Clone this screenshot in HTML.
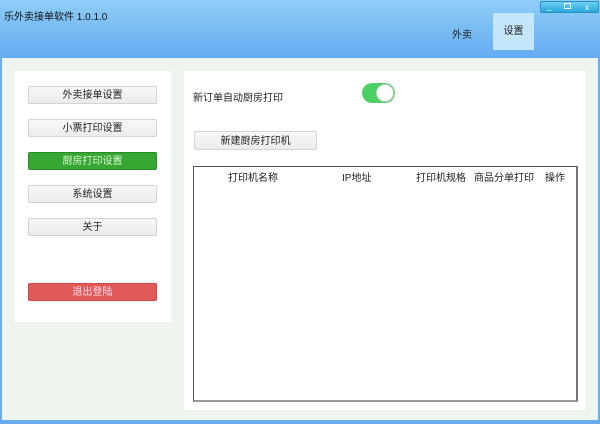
<!DOCTYPE html>
<html><head><meta charset="utf-8"><style>
*{margin:0;padding:0;box-sizing:border-box}
body{width:600px;height:424px;overflow:hidden;background:#6aaef0;font-family:"Liberation Sans","Noto Sans CJK SC",sans-serif;font-size:10px;color:#222;position:relative}
.hdr{position:absolute;left:0;top:0;width:600px;height:58px;background:linear-gradient(#8fcdf8,#64acf2)}
.title{position:absolute;left:4px;top:8px;font-size:10px;color:#111}
.nav1{position:absolute;left:452px;top:26px;font-size:10px}
.nav2{position:absolute;left:493px;top:13px;width:41px;height:37px;background:#c4e6fb;text-align:center;line-height:37px;font-size:10px}
.ctl{position:absolute;left:540px;top:1px;width:59px;height:12px;background:linear-gradient(#6cd0f2,#2aa8dc);border:1px solid #2790c4;border-radius:2px;color:#fff;font-size:8px;line-height:10px}
.body{position:absolute;left:2px;top:58px;width:596px;height:362px;background:#eef5ee}
.lp{position:absolute;left:15px;top:71px;width:156px;height:251px;background:#fff}
.rp{position:absolute;left:184px;top:71px;width:401px;height:339px;background:#fff}
.btn{position:absolute;left:28px;width:129px;height:18px;background:linear-gradient(#f8f8f8,#ececec);border:1px solid #d4d4d4;border-radius:2px;text-align:center;line-height:16px;padding-top:1px;font-size:10px;color:#222}
.g{background:#36a832;border-color:#2a8a2a;color:#dff5dc}
.r{background:#e05a58;border-color:#d04848;color:#fde}
.tog{position:absolute;left:362px;top:83px;width:33px;height:20px;border-radius:10px;background:#4cd066}
.tog i{position:absolute;right:1px;top:1px;width:18px;height:18px;border-radius:50%;background:#fff;border:1px solid #ccc}
.tbl{position:absolute;left:193px;top:166px;width:385px;height:236px;border:1px solid #555;border-right:2px solid #777;border-bottom:2px solid #999;background:#fff}
.th{position:absolute;top:169px;font-size:10px}
</style></head><body>
<div class="hdr"></div>
<div class="title">乐外卖接单软件 1.0.1.0</div>
<div class="nav1">外卖</div>
<div class="nav2">设置</div>
<div class="ctl"><span style="position:absolute;left:6px;top:0">_</span><span style="position:absolute;left:23px;top:1px;width:7px;height:6px;border:1px solid #fff"></span><span style="position:absolute;left:44px;top:1px">x</span></div>
<div class="body"></div>
<div class="lp"></div>
<div class="rp"></div>
<div class="btn" style="top:86px">外卖接单设置</div>
<div class="btn" style="top:119px">小票打印设置</div>
<div class="btn g" style="top:152px">厨房打印设置</div>
<div class="btn" style="top:185px">系统设置</div>
<div class="btn" style="top:218px">关于</div>
<div class="btn r" style="top:283px">退出登陆</div>
<div style="position:absolute;left:193px;top:89px">新订单自动厨房打印</div>
<div class="tog"><i></i></div>
<div class="btn" style="left:194px;top:131px;width:123px;height:19px;line-height:17px">新建厨房打印机</div>
<div class="tbl"></div>
<div class="th" style="left:228px">打印机名称</div>
<div class="th" style="left:342px">IP地址</div>
<div class="th" style="left:416px">打印机规格</div>
<div class="th" style="left:474px">商品分单打印</div>
<div class="th" style="left:545px">操作</div>
</body></html>
